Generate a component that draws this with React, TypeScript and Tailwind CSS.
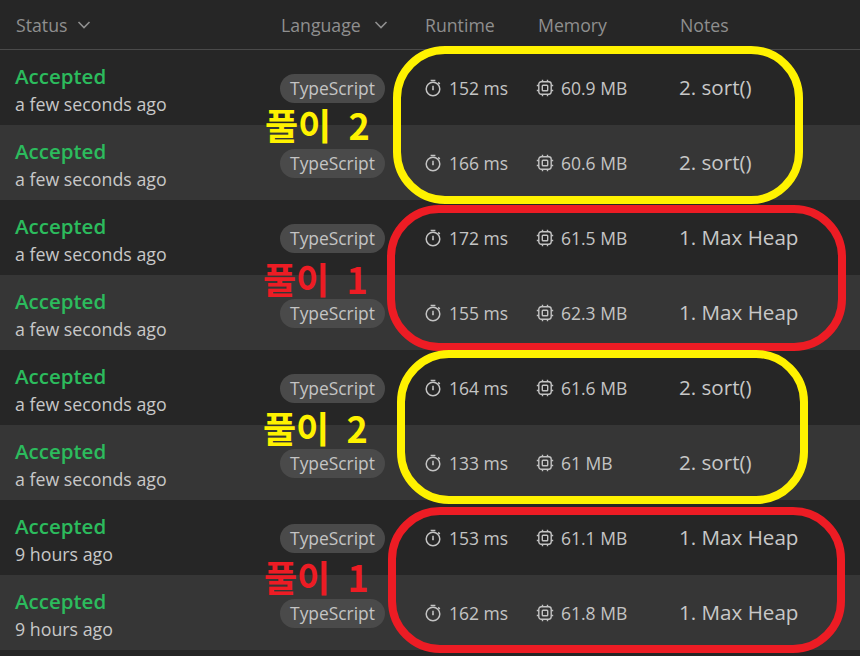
import React from "react";

const rows = [
  ["a few seconds ago", "152 ms", "60.9 MB", "2. sort()"],
  ["a few seconds ago", "166 ms", "60.6 MB", "2. sort()"],
  ["a few seconds ago", "172 ms", "61.5 MB", "1. Max Heap"],
  ["a few seconds ago", "155 ms", "62.3 MB", "1. Max Heap"],
  ["a few seconds ago", "164 ms", "61.6 MB", "2. sort()"],
  ["a few seconds ago", "133 ms", "61 MB", "2. sort()"],
  ["9 hours ago", "153 ms", "61.1 MB", "1. Max Heap"],
  ["9 hours ago", "162 ms", "61.8 MB", "1. Max Heap"],
];

const Chevron = ({ className }: { className: string }) => (
  <svg width="14" height="14" viewBox="0 0 14 14" fill="none" stroke="currentColor" strokeWidth="1.6" className={className}>
    <path d="M1.5 4 L7 9.5 L12.5 4" />
  </svg>
);

const Timer = () => (
  <svg width="18" height="18" viewBox="0 0 18 18" fill="none" stroke="#c4c4c4" strokeWidth="1.5" className="shrink-0 mb-[2px]">
    <circle cx="9" cy="10" r="6.8" />
    <path d="M6.6 1.5 H11.4" />
    <path d="M14.2 3.4 L15.8 5" />
    <path d="M9 6.8 V10" />
    <circle cx="9" cy="10.4" r="0.9" fill="#c4c4c4" stroke="none" />
  </svg>
);

const Chip = () => (
  <svg width="18" height="18" viewBox="0 0 18 18" fill="none" stroke="#c4c4c4" strokeWidth="1.4" className="shrink-0 mb-[2px]">
    <rect x="2.8" y="2.8" width="12.4" height="12.4" rx="2.4" />
    <rect x="6.3" y="6.3" width="5.4" height="5.4" rx="0.8" />
    <path d="M6.5 0.8 V2.8 M11.5 0.8 V2.8 M6.5 15.2 V17.2 M11.5 15.2 V17.2 M0.8 6.5 H2.8 M0.8 11.5 H2.8 M15.2 6.5 H17.2 M15.2 11.5 H17.2" />
  </svg>
);

const Ring = ({ className }: { className: string }) => (
  <div className={"absolute border-[8px] " + className} />
);

const Label = ({ className, children }: { className: string; children: React.ReactNode }) => (
  <div className={"absolute text-[36px] leading-none font-bold [word-spacing:9px] font-['Noto_Sans_CJK_KR',sans-serif] " + className}>
    {children}
  </div>
);

export default function App() {
  return (
    <div className="relative w-[860px] h-[656px] overflow-hidden bg-[#262626] font-['Open_Sans','Noto_Sans',sans-serif]">
      <div className="flex h-[50px] items-center border-b border-[#4a4a4a] pt-[2px] text-[17.7px] text-[#8f8f8f]">
        <div className="w-[281px] pl-4 flex items-center">Status<Chevron className="ml-[10px]" /></div>
        <div className="w-[144px] flex items-center">Language<Chevron className="ml-[13px]" /></div>
        <div className="w-[113px]">Runtime</div>
        <div className="w-[142px]">Memory</div>
        <div>Notes</div>
      </div>
      {rows.map((r, i) => (
        <div key={i} className={"flex h-[75px] items-center " + (i % 2 ? "bg-[#363636]" : "bg-[#262626]")}>
          <div className="w-[280px] pl-[15px] flex flex-col mt-[5px]">
            <div className="text-[20.5px] leading-[28px] font-semibold text-[#2cbb5d]">Accepted</div>
            <div className="text-[17.8px] leading-[28px] text-[#c8c8c8]">{r[0]}</div>
          </div>
          <div className="w-[145px] flex items-center mt-[2px]">
            <span className="h-[29px] w-[105px] rounded-full bg-[#4a4a4a] text-[17.4px] text-[#c4c4c4] flex items-center justify-center">TypeScript</span>
          </div>
          <div className="w-[112px] flex items-center gap-[7px] text-[17.5px] text-[#c4c4c4] -ml-px mt-[2px]"><Timer />{r[1]}</div>
          <div className="w-[143px] flex items-center gap-[7px] text-[17.5px] text-[#c4c4c4] mt-[2px]"><Chip />{r[2]}</div>
          <div className="text-[20.6px] text-[#c8c8c8]">{r[3]}</div>
        </div>
      ))}

      <Ring className="left-[393px] top-[46px] w-[410px] h-[158px] rounded-[52px] border-[#fff200]" />
      <Ring className="left-[387px] top-[205px] w-[459px] h-[146px] rounded-[52px] border-[#ed1c24]" />
      <Ring className="left-[397px] top-[350px] w-[411px] h-[154px] rounded-[52px] border-[#fff200]" />
      <Ring className="left-[388px] top-[507px] w-[457px] h-[146px] rounded-[52px] border-[#ed1c24]" />

      <Label className="left-[265px] top-[106px] text-[#fff200]">풀이 2</Label>
      <Label className="left-[263px] top-[260px] text-[#ed1c24]">풀이 1</Label>
      <Label className="left-[263px] top-[409px] text-[#fff200]">풀이 2</Label>
      <Label className="left-[264px] top-[558px] text-[#ed1c24]">풀이 1</Label>
    </div>
  );
}
